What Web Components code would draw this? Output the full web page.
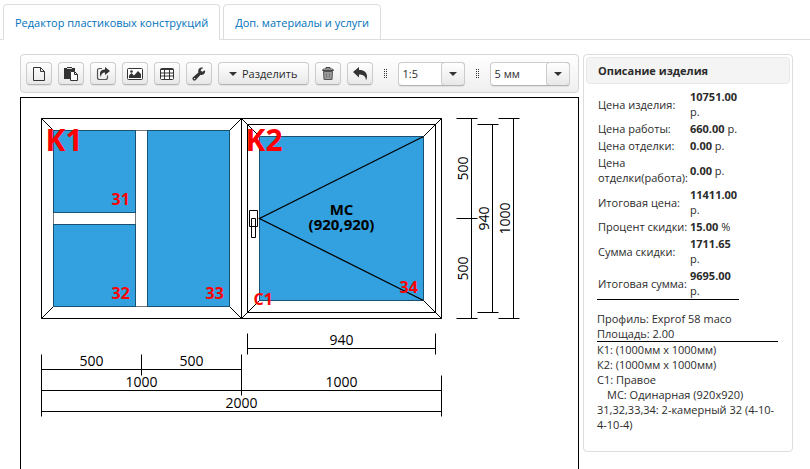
<!DOCTYPE html>
<html lang="ru">
<head>
<meta charset="utf-8">
<title>Редактор пластиковых конструкций</title>
<style>
  body { margin: 0; background: #fff; color: #2b2b2b; font: 11px/15px "Open Sans", "Noto Sans", sans-serif; }
</style>
</head>
<body>
<window-editor></window-editor>
<script>
const define = (name, html, setup) => {
  const template = document.createElement('template');
  template.innerHTML = html;
  customElements.define(name, class extends HTMLElement {
    connectedCallback() {
      if (this.shadowRoot) return;
      this.attachShadow({ mode: 'open' }).append(template.content.cloneNode(true));
      if (setup) setup(this, this.shadowRoot);
    }
  });
};

define('tab-bar', `
<style>
  :host { display: block; padding: 4px 0 0 3px; border-bottom: 1px solid #ddd; }
  nav { display: flex; gap: 3px; }
</style>
<nav><slot></slot></nav>`);

define('tab-link', `
<style>
  :host { display: block; margin-bottom: -1px; }
  a { display: block; padding: 10px 11px 9px; border: 1px solid #ddd; border-radius: 4px 4px 0 0; color: #0072bc; text-decoration: none; }
  :host([active]) a { background: #fff; border-bottom-color: #fff; }
</style>
<a href="#"><slot></slot></a>`);

const icons = {
  file: '<path d="M2.5 1.5h7l4 4v9h-11zM9.5 1.5v4h4" fill="none" stroke="#333"/>',
  paste: '<path d="M1 2h3V1h5v1h3v3H7v8H1z" fill="#333"/><path d="M4 2.5h5" stroke="#ddd"/><path d="M7.500 5.500h4l3 3v6h-7zM11.500 5.500v3h3" fill="#fff" stroke="#333"/>',
  share: '<path d="M7 2.500H4.500Q2.500 2.500 2.500 4.500v7q0 2 2 2h6q2 0 2-2V9.500" fill="none" stroke="#555" stroke-width="1.200"/><path d="M10 1l5 4-5 4V6.500Q6 6.500 6 11 4.500 9 5 6.700 6 3.600 10 3.500z" fill="#333"/>',
  image: '<rect x=".5" y="2.500" width="15" height="11" rx="1" fill="#fff" stroke="#333"/><path d="M2 12V9.500l2.500-2.500L7 9.500 11 5l3 3v4z" fill="#333"/><circle cx="4.500" cy="5.500" r="1.300" fill="#333"/>',
  table: '<rect x="1.500" y="2.500" width="13" height="11" rx="1" fill="#fff" stroke="#333"/><path d="M1.500 3.500h13M1.500 7h13M1.500 10h13M5.500 3v10M10.500 3v10" stroke="#333"/>',
  wrench: '<path d="M14 4.200l-2.700 1.500-1.500-1V3.500L12.200 2C10 .8 7.300 2.200 7.200 5q0 .8.200 1.400L2 11.300a1.900 1.900 0 0 0 2.700 2.700L9.600 8.700c2.900.9 5.100-1.700 4.400-4.500z" fill="#333"/><circle cx="3.500" cy="12.600" r=".7" fill="#fff"/>',
  trash: '<path d="M3.500 5.500h9l-.5 8H4z" fill="#999" stroke="#555"/><path d="M2.500 4.500q0-1.500 2-1.500h7q2 0 2 1.500zM6 3V1.500h4V3" fill="#ddd" stroke="#444"/><path d="M6.500 7v5M9.500 7v5" stroke="#777"/>',
  undo: '<path d="M1 6l6-5v3c5-.2 8 2.500 8 6.500 0 1.500-.4 2.800-1 4 0-4-2.500-6-7-6v3z" fill="#333"/>'
};

define('tool-button', `
<style>
  :host { display: block; }
  button { display: flex; align-items: center; justify-content: center; gap: 5px; box-sizing: border-box; height: 23px; min-width: 26px; padding: 0 4px; border: 1px solid #ccc; border-bottom-color: #b3b3b3; border-radius: 4px; background: linear-gradient(#fff, #e8e8e8); box-shadow: 0 1px 1px #0001; color: inherit; font: inherit; }
  :host([wide]) button { padding: 0 10px; }
  svg { display: block; width: 16px; height: 16px; }
  i { border: 4px solid transparent; border-top-color: #333; border-bottom: 0; }
</style>
<button type="button"><slot></slot></button>`, (host, root) => {
  const button = root.querySelector('button');
  const icon = host.getAttribute('icon');
  if (icon) {
    button.setAttribute('aria-label', host.getAttribute('label'));
    button.insertAdjacentHTML('afterbegin', `<svg viewBox="0 0 16 16" aria-hidden="true">${icons[icon]}</svg>`);
  } else {
    button.insertAdjacentHTML('afterbegin', '<i></i>');
  }
});

define('tool-grip', `
<style>
  :host { display: block; padding: 0 5px; }
  svg { display: block; }
</style>
<svg width="3" height="9" aria-hidden="true"><path d="M.5 0v9M2.500 0v9" stroke="#333" stroke-dasharray="1 1"/></svg>`);

define('tool-select', `
<style>
  :host { display: grid; height: 24px; }
  select, span { grid-area: 1 / 1; }
  select { appearance: none; box-sizing: border-box; width: 100%; height: 24px; padding: 0 28px 0 4px; border: 1px solid #ccc; border-bottom-color: #b3b3b3; border-radius: 4px; background: #fff; box-shadow: 0 1px 1px #0001; color: inherit; font: inherit; }
  span { justify-self: end; box-sizing: border-box; width: 24px; height: 24px; display: grid; place-items: center; border: 1px solid #ccc; border-bottom-color: #b3b3b3; border-radius: 4px; background: linear-gradient(#fff, #e8e8e8); pointer-events: none; }
  i { border: 4px solid transparent; border-top-color: #333; border-bottom: 0; }
</style>
<select></select><span aria-hidden="true"><i></i></span>`, (host, root) => {
  const select = root.querySelector('select');
  select.setAttribute('aria-label', host.getAttribute('label'));
  select.add(new Option(host.getAttribute('value')));
});

define('tool-bar', `
<style>
  :host { display: flex; align-items: center; gap: 6px; box-sizing: border-box; height: 39px; padding: 0 5px; border: 1px solid #d4d4d4; border-radius: 4px; background: linear-gradient(#fff, #efefef); }
  .scale { width: 67px; }
  .step { width: 80px; }
</style>
<tool-button icon="file" label="Новый"></tool-button>
<tool-button icon="paste" label="Вставить"></tool-button>
<tool-button icon="share" label="Экспорт"></tool-button>
<tool-button icon="image" label="Изображение"></tool-button>
<tool-button icon="table" label="Таблица"></tool-button>
<tool-button icon="wrench" label="Настройки"></tool-button>
<tool-button wide>Разделить</tool-button>
<tool-button icon="trash" label="Удалить"></tool-button>
<tool-button icon="undo" label="Отменить"></tool-button>
<tool-grip></tool-grip>
<tool-select class="scale" label="Масштаб" value="1:5"></tool-select>
<tool-grip></tool-grip>
<tool-select class="step" label="Шаг" value="5 мм"></tool-select>`);

/* The drawing's units are 5 mm each; the origin is the outer corner of frame K1. */
define('window-drawing', `
<style>
  :host { display: block; overflow: hidden; border: 1px solid #000; border-bottom: 0; }
  svg { display: block; font-family: "Open Sans", "Noto Sans", sans-serif; }
  .line { fill: none; stroke: #000; }
  .mullion { fill: #fff; stroke: #777; }
  .glass { fill: #33a0df; stroke: #1a5070; }
  .dims text { font-size: 14px; text-anchor: middle; fill: #000; }
  .mark { font-size: 16px; font-weight: 700; fill: #f00; }
  .big { font-size: 30px; }
  .net { font-size: 15px; font-weight: 700; text-anchor: middle; fill: #000; }
</style>
<svg width="557" height="370" viewBox="-20.5 -20.5 557 370" role="img" aria-label="Чертёж окна">
  <path class="line" d="M0 0h400v200H0zM200 0v200M206 6h188v188H206zM0 0l12 12M200 0l-12 12M0 200l12-12M200 200l-12-12M200 0l18 18M400 0l-18 18M200 200l18-18M400 200l-18-18"/>
  <rect class="mullion" x="12" y="12" width="176" height="176"/>
  <rect class="mullion" x="12" y="94" width="82" height="12"/>
  <g class="glass">
    <rect x="12" y="12" width="82" height="82"/>
    <rect x="12" y="106" width="82" height="82"/>
    <rect x="106" y="12" width="82" height="176"/>
    <rect x="218" y="18" width="164" height="164"/>
  </g>
  <path class="line" d="M382 18L218 100l164 82" stroke-width="1.300"/>
  <path class="line" d="M208 92h8v16h-8zM210 100h4v19h-4z"/>
  <text class="mark big" x="4" y="32">K1</text>
  <text class="mark big" x="204" y="32">K2</text>
  <text class="mark" x="70" y="86">31</text>
  <text class="mark" x="70" y="180">32</text>
  <text class="mark" x="164" y="180">33</text>
  <text class="mark" x="358" y="174">34</text>
  <text class="mark" x="212" y="186">C1</text>
  <text class="net"><tspan x="300" y="96">MC</tspan><tspan x="300" y="111">(920,920)</tspan></text>
  <g class="dims">
    <path class="line" d="M430 0v200M415 0h21M415 100h21M415 200h21M451 6v188M436 6h21M436 194h21M472 0v200M457 0h21M457 200h21"/>
    <path class="line" d="M206 230h188M206 215v21M394 215v21M0 251h200M0 236v62M100 236v21M200 236v41M0 272h400M400 257v41M0 293h400"/>
    <text transform="translate(426 50) rotate(-90)">500</text>
    <text transform="translate(426 150) rotate(-90)">500</text>
    <text transform="translate(447 100) rotate(-90)">940</text>
    <text transform="translate(468 100) rotate(-90)">1000</text>
    <text x="300" y="226">940</text>
    <text x="50" y="247">500</text>
    <text x="150" y="247">500</text>
    <text x="100" y="268">1000</text>
    <text x="300" y="268">1000</text>
    <text x="200" y="289">2000</text>
  </g>
</svg>`);

define('product-summary', `
<style>
  :host { display: block; padding: 2px 2px 19px; border: 1px solid #ddd; border-radius: 4px; }
  h2 { margin: 0; padding: 5px 11px; border: 1px solid #e8e8e8; border-radius: 4px; background: #f4f4f4; font: inherit; font-weight: 700; }
  .body { padding: 4px 12px 0 11px; }
  table { width: 142px; border-spacing: 0; border-bottom: 1px solid #000; }
  th, td { padding: 1px; text-align: left; font-weight: 400; }
  th { width: 90px; }
  p { margin: 0; }
  .profile { padding-top: 11px; border-bottom: 1px solid #000; }
  .inner { padding-left: 10px; }
</style>
<h2>Описание изделия</h2>
<div class="body">
  <table>
    <tr><th scope="row">Цена изделия:</th><td><b>10751.00</b> р.</td></tr>
    <tr><th scope="row">Цена работы:</th><td><b>660.00</b> р.</td></tr>
    <tr><th scope="row">Цена отделки:</th><td><b>0.00</b> р.</td></tr>
    <tr><th scope="row">Цена отделки(работа):</th><td><b>0.00</b> р.</td></tr>
    <tr><th scope="row">Итоговая цена:</th><td><b>11411.00</b> р.</td></tr>
    <tr><th scope="row">Процент скидки:</th><td><b>15.00</b> %</td></tr>
    <tr><th scope="row">Сумма скидки:</th><td><b>1711.65</b> р.</td></tr>
    <tr><th scope="row">Итоговая сумма:</th><td><b>9695.00</b> р.</td></tr>
  </table>
  <div class="profile">
    <p>Профиль: Exprof 58 maco</p>
    <p>Площадь: 2.00</p>
  </div>
  <p>К1: (1000мм x 1000мм)</p>
  <p>К2: (1000мм x 1000мм)</p>
  <p>С1: Правое</p>
  <p class="inner">МС: Одинарная (920x920)</p>
  <p>31,32,33,34: 2-камерный 32 (4-10-4-10-4)</p>
</div>`);

define('window-editor', `
<style>
  :host { display: flex; flex-direction: column; min-height: 100vh; }
  main { flex: 1; display: grid; grid-template-columns: minmax(0, 1fr) 210px; gap: 4px; padding: 14px 17px 0 20px; }
  .work { display: flex; flex-direction: column; gap: 4px; }
  window-drawing { flex: 1; }
  product-summary { box-sizing: border-box; align-self: start; }
</style>
<tab-bar>
  <tab-link active>Редактор пластиковых конструкций</tab-link>
  <tab-link>Доп. материалы и услуги</tab-link>
</tab-bar>
<main>
  <div class="work">
    <tool-bar></tool-bar>
    <window-drawing></window-drawing>
  </div>
  <product-summary></product-summary>
</main>`);
</script>
</body>
</html>
